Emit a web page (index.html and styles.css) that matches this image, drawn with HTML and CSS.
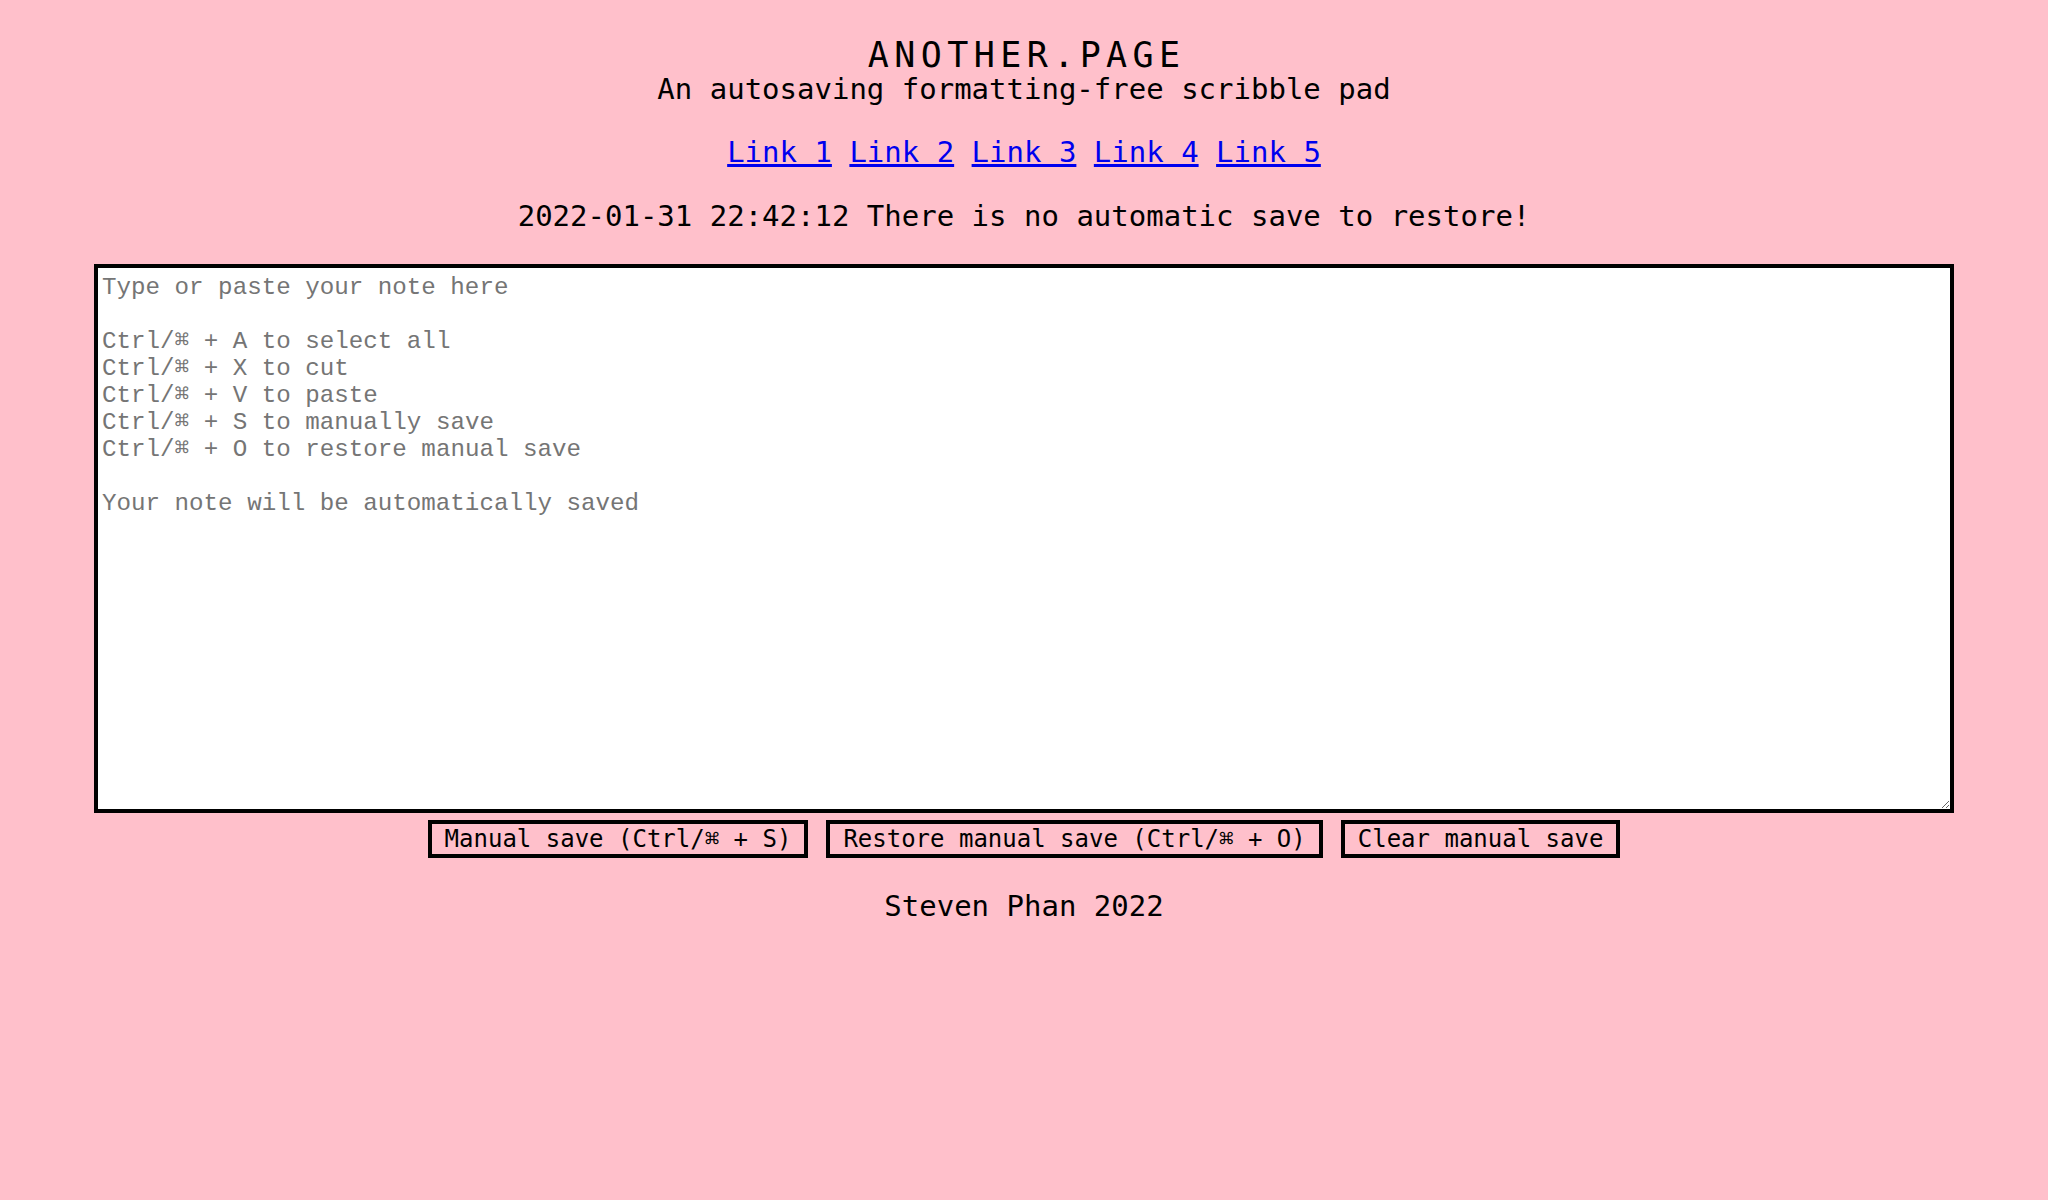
FILE: index.html
```html
<!DOCTYPE html>
<html lang="en">
<head>
<meta charset="utf-8">
<title>ANOTHER.PAGE</title>
<link rel="stylesheet" href="styles.css">
</head>
<body>
<header class="masthead">
  <h1 class="title">ANOTHER.PAGE</h1>
  <p class="subtitle">An autosaving formatting-free scribble pad</p>
</header>
<nav class="links">
  <a href="#">Link 1</a> <a href="#">Link 2</a> <a href="#">Link 3</a> <a href="#">Link 4</a> <a href="#">Link 5</a>
</nav>
<p class="status">2022-01-31 22:42:12 There is no automatic save to restore!</p>
<main class="editor">
  <textarea class="note" placeholder="Type or paste your note here&#10;&#10;Ctrl/⌘ + A to select all&#10;Ctrl/⌘ + X to cut&#10;Ctrl/⌘ + V to paste&#10;Ctrl/⌘ + S to manually save&#10;Ctrl/⌘ + O to restore manual save&#10;&#10;Your note will be automatically saved"></textarea>
  <div class="actions">
    <button class="btn" type="button">Manual save (Ctrl/⌘ + S)</button>
    <button class="btn" type="button">Restore manual save (Ctrl/⌘ + O)</button>
    <button class="btn" type="button">Clear manual save</button>
  </div>
</main>
<footer class="footer">Steven Phan 2022</footer>
</body>
</html>
```

FILE: styles.css
```css
html, body {
  margin: 0;
  padding: 0;
  background: #ffc0cb;
}

body {
  font-family: "DejaVu Sans Mono", monospace;
  color: #000;
  text-align: center;
  padding-top: 38px;
}

.masthead {
  margin: 0;
}

.title {
  margin: 0;
  font-weight: normal;
  font-size: 35px;
  line-height: 34px;
  letter-spacing: 5.4px;
  padding-left: 5.4px;
}

.subtitle {
  margin: 0;
  font-size: 29px;
  line-height: 34px;
}

.links {
  margin-top: 29px;
  font-size: 29px;
  line-height: 34px;
}

.links a {
  color: #0000ee;
  text-decoration-thickness: 3px;
}

.status {
  margin: 30px 0 0;
  font-size: 29px;
  line-height: 34px;
}

.editor {
  margin-top: 31px;
}

.note {
  display: block;
  box-sizing: border-box;
  width: 1860px;
  height: 549px;
  margin: 0 auto;
  padding: 6px 4px 2px;
  border: 4px solid #000;
  border-radius: 0;
  background: #fff;
  font-family: "Liberation Mono", "DejaVu Sans Mono", monospace;
  font-size: 24.2px;
  line-height: 27px;
  color: #000;
  outline: none;
}

.note::placeholder {
  color: #757575;
  font-family: "Liberation Mono", "DejaVu Sans Mono", monospace;
}

.actions {
  display: flex;
  justify-content: center;
  gap: 18px;
  margin-top: 7px;
}

.btn {
  font-family: "DejaVu Sans Mono", monospace;
  font-size: 24px;
  line-height: 28px;
  padding: 1px 13px;
  border: 4px solid #000;
  border-radius: 0;
  background: #ffc0cb;
  color: #000;
  margin: 0;
}

.footer {
  margin-top: 31px;
  font-size: 29px;
  line-height: 34px;
}
```
